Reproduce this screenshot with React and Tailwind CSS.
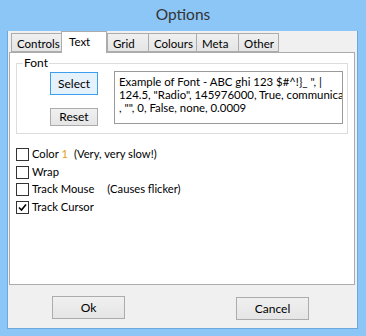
import React from "react"

const font = { fontFamily: "Lato, 'Liberation Sans', sans-serif" }

const Tab = ({ label, active, w }) =>
  active ? (
    <div className={`${w} h-[22px] -ml-px -mb-px relative z-10 bg-white border border-b-0 border-[#acacac] pl-[7px] pt-[3px] text-[11.5px] leading-[14px] text-black whitespace-nowrap overflow-hidden`}>
      {label}
    </div>
  ) : (
    <div className={`${w} h-[19px] mt-[2px] -ml-px first:ml-0 bg-gradient-to-b from-[#f0f0f0] to-[#e5e5e5] border border-[#acacac] pl-[5px] pt-[3px] text-[11.5px] leading-[14px] text-black whitespace-nowrap overflow-hidden`}>
      {label}
    </div>
  )

const Check = ({ checked, children }) => (
  <div className="flex items-center h-[17.5px] text-[11.2px] text-black">
    <div className="w-[13px] h-[13px] border border-[#333] bg-white flex items-center justify-center mr-[3px]">
      {checked && (
        <svg width="9" height="9" viewBox="0 0 9 9">
          <path d="M1 4.5 L3.5 7 L8 1.5" stroke="#000" strokeWidth="1.6" fill="none" />
        </svg>
      )}
    </div>
    {children}
  </div>
)

const Btn = ({ children, className }) => (
  <div className={`flex items-center justify-center border border-[#acacac] bg-gradient-to-b from-[#f0f0f0] to-[#e5e5e5] text-[12px] text-black ${className}`}>
    {children}
  </div>
)

export default function App() {
  return (
    <div className="w-[366px] h-[336px] bg-[#8cc6f7] flex flex-col" style={font}>
      <div className="h-[31px] flex items-center justify-center text-[15.5px] text-[#333] pb-[1px]">Options</div>
      <div className="ml-[7px] mr-[8px] mb-[7px] flex-1 border border-[#6aa8dd] border-t-0 bg-[#f0f0f0] flex flex-col">
        <div className="flex flex-col pl-[1px] pr-[1px]">
          <div className="flex items-start h-[21px] pl-[2px]">
            <Tab label="Controls" w="w-[51px]" />
            <Tab label="Text" active w="w-[46px]" />
            <div className="flex items-start">
              <Tab label="Grid" w="w-[42px]" />
              <Tab label="Colours" w="w-[49px]" />
              <Tab label="Meta" w="w-[43px]" />
              <Tab label="Other" w="w-[41px]" />
            </div>
          </div>
          <div className="h-[233px] mr-[1px] bg-white border border-[#acacac] flex flex-col px-[6px]">
            <div className="mt-[10px] h-[71px] border border-[#dcdcdc] relative">
              <span className="absolute left-[6px] -top-[9px] bg-white px-[1px] text-[12px] leading-[16px]">Font</span>
              <div className="flex pt-[8px]">
                <div className="flex flex-col ml-[33px]">
                  <Btn className="w-[48px] h-[23px] !border-[#3c9ef0] !bg-none bg-[#e5f1fb]">Select</Btn>
                  <Btn className="w-[48px] h-[18px] mt-[13px]">Reset</Btn>
                </div>
                <div className="ml-[16px] mt-[-1px] w-[229px] h-[53px] border border-[#9a9a9a] px-[4px] pt-[3px] text-[11.4px] leading-[13px] overflow-hidden whitespace-nowrap">
                  <div>Example of Font - ABC ghi 123 $#^!}_ ", |</div>
                  <div>124.5, "Radio", 145976000, True, communica</div>
                  <div>, "", 0, False, none, 0.0009</div>
                </div>
              </div>
            </div>
            <div className="mt-[12px] flex flex-col">
              <Check>
                <span>Color <span className="text-[#e0a020]">1</span></span>
                <span className="ml-[6px]">(Very, very slow!)</span>
              </Check>
              <Check>Wrap</Check>
              <Check>
                <span>Track Mouse</span>
                <span className="ml-[13px]">(Causes flicker)</span>
              </Check>
              <Check checked>Track Cursor</Check>
            </div>
          </div>
        </div>
        <div className="flex mt-[11px]">
          <Btn className="ml-[44px] w-[73px] h-[23px]">Ok</Btn>
          <Btn className="ml-[111px] mt-[1px] w-[73px] h-[23px]">Cancel</Btn>
        </div>
      </div>
    </div>
  )
}
